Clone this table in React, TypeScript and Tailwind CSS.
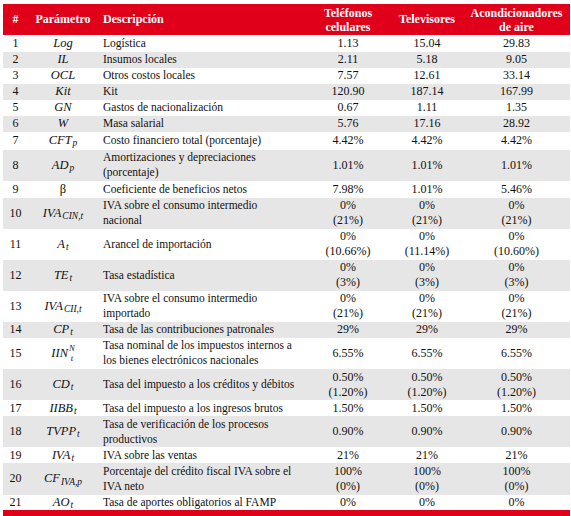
import type { ReactNode } from "react";

type Row = {
  n: number;
  p: ReactNode;
  d: string;
  v: [string, string, string];
  h: string;
};

// símbolo en cursiva matemática con subíndice / superíndice opcional
function Sym({ b, sub, sup }: { b: string; sub?: string; sup?: string }) {
  if (sub && sup) {
    return (
      <span className="inline-flex items-center italic">
        {b}
        <span className="inline-flex flex-col text-[8.5px] leading-[10px] ml-[1px]">
          <span>{sup}</span>
          <span>{sub}</span>
        </span>
      </span>
    );
  }
  return (
    <span className="italic whitespace-nowrap">
      {b}
      {sub && <sub className="text-[9.5px] ml-[1px]">{sub}</sub>}
    </span>
  );
}

const rows: Row[] = [
  { n: 1, p: <Sym b="Log" />, d: "Logística", v: ["1.13", "15.04", "29.83"], h: "h-[16.5px]" },
  { n: 2, p: <Sym b="IL" />, d: "Insumos locales", v: ["2.11", "5.18", "9.05"], h: "h-[16px]" },
  { n: 3, p: <Sym b="OCL" />, d: "Otros costos locales", v: ["7.57", "12.61", "33.14"], h: "h-[16px]" },
  { n: 4, p: <Sym b="Kit" />, d: "Kit", v: ["120.90", "187.14", "167.99"], h: "h-[16px]" },
  { n: 5, p: <Sym b="GN" />, d: "Gastos de nacionalización", v: ["0.67", "1.11", "1.35"], h: "h-[16px]" },
  { n: 6, p: <Sym b="W" />, d: "Masa salarial", v: ["5.76", "17.16", "28.92"], h: "h-[16px]" },
  { n: 7, p: <Sym b="CFT" sub="p" />, d: "Costo financiero total (porcentaje)", v: ["4.42%", "4.42%", "4.42%"], h: "h-[18px]" },
  { n: 8, p: <Sym b="AD" sub="p" />, d: "Amortizaciones y depreciaciones|(porcentaje)", v: ["1.01%", "1.01%", "1.01%"], h: "h-[31px]" },
  { n: 9, p: <span>β</span>, d: "Coeficiente de beneficios netos", v: ["7.98%", "1.01%", "5.46%"], h: "h-[17px]" },
  { n: 10, p: <Sym b="IVA" sub="CIN,t" />, d: "IVA sobre el consumo intermedio|nacional", v: ["0%|(21%)", "0%|(21%)", "0%|(21%)"], h: "h-[31px]" },
  { n: 11, p: <Sym b="A" sub="t" />, d: "Arancel de importación", v: ["0%|(10.66%)", "0%|(11.14%)", "0%|(10.60%)"], h: "h-[31px]" },
  { n: 12, p: <Sym b="TE" sub="t" />, d: "Tasa estadística", v: ["0%|(3%)", "0%|(3%)", "0%|(3%)"], h: "h-[31px]" },
  { n: 13, p: <Sym b="IVA" sub="CII,t" />, d: "IVA sobre el consumo intermedio|importado", v: ["0%|(21%)", "0%|(21%)", "0%|(21%)"], h: "h-[31px]" },
  { n: 14, p: <Sym b="CP" sub="t" />, d: "Tasa de las contribuciones patronales", v: ["29%", "29%", "29%"], h: "h-[16px]" },
  { n: 15, p: <Sym b="IIN" sub="t" sup="N" />, d: "Tasa nominal de los impuestos internos a|los bienes electrónicos nacionales", v: ["6.55%", "6.55%", "6.55%"], h: "h-[31.5px]" },
  { n: 16, p: <Sym b="CD" sub="t" />, d: "Tasa del impuesto a los créditos y débitos", v: ["0.50%|(1.20%)", "0.50%|(1.20%)", "0.50%|(1.20%)"], h: "h-[31px]" },
  { n: 17, p: <Sym b="IIBB" sub="t" />, d: "Tasa del impuesto a los ingresos brutos", v: ["1.50%", "1.50%", "1.50%"], h: "h-[16px]" },
  { n: 18, p: <Sym b="TVPP" sub="t" />, d: "Tasa de verificación de los procesos|productivos", v: ["0.90%", "0.90%", "0.90%"], h: "h-[31px]" },
  { n: 19, p: <Sym b="IVA" sub="t" />, d: "IVA sobre las ventas", v: ["21%", "21%", "21%"], h: "h-[16px]" },
  { n: 20, p: <Sym b="CF" sub="IVA,p" />, d: "Porcentaje del crédito fiscal IVA sobre el|IVA neto", v: ["100%|(0%)", "100%|(0%)", "100%|(0%)"], h: "h-[31.5px]" },
  { n: 21, p: <Sym b="AO" sub="t" />, d: "Tasa de aportes obligatorios al FAMP", v: ["0%", "0%", "0%"], h: "h-[15.5px]" },
];

function Lines({ text }: { text: string }) {
  const parts = text.split("|");
  return (
    <>
      {parts.map((t, i) => (
        <span key={i} className="block whitespace-nowrap">
          {t}
        </span>
      ))}
    </>
  );
}

export default function App() {
  return (
    <div className="w-[571px] min-h-[516px] bg-white pt-[4px] pl-[3px] font-['Liberation_Serif','Times_New_Roman',serif] text-[#111]">
      <table className="table-fixed border-collapse w-[567px] text-[12px] leading-[15px]">
        <colgroup>
          <col className="w-[25px]" />
          <col className="w-[70px]" />
          <col className="w-[207px]" />
          <col className="w-[86px]" />
          <col className="w-[72px]" />
          <col className="w-[107px]" />
        </colgroup>
        <thead>
          <tr className="h-[31px] bg-[#e1001a] text-white font-bold">
            <th className="text-center p-0">#</th>
            <th className="text-center p-0">Parámetro</th>
            <th className="text-left pl-[5px] p-0">Descripción</th>
            <th className="text-center p-0 leading-[14px]">
              Teléfonos
              <br />
              celulares
            </th>
            <th className="text-center p-0">Televisores</th>
            <th className="text-center p-0 leading-[14px]">
              Acondicionadores
              <br />
              de aire
            </th>
          </tr>
        </thead>
        <tbody>
          {rows.map((r) => (
            <tr key={r.n} className={`${r.h} ${r.n % 2 === 0 ? "bg-[#e7e6e6]" : "bg-white"}`}>
              <td className="text-center align-middle p-0">{r.n}</td>
              <td className="text-center align-middle p-0 text-[12.5px]">{r.p}</td>
              <td className="text-left align-middle p-0 pl-[5px] text-[11.5px]">
                <Lines text={r.d} />
              </td>
              {r.v.map((v, i) => (
                <td key={i} className="text-center align-middle p-0">
                  <Lines text={v} />
                </td>
              ))}
            </tr>
          ))}
        </tbody>
      </table>
      <div className="w-[567px] h-[6px] bg-[#e1001a]" />
    </div>
  );
}
